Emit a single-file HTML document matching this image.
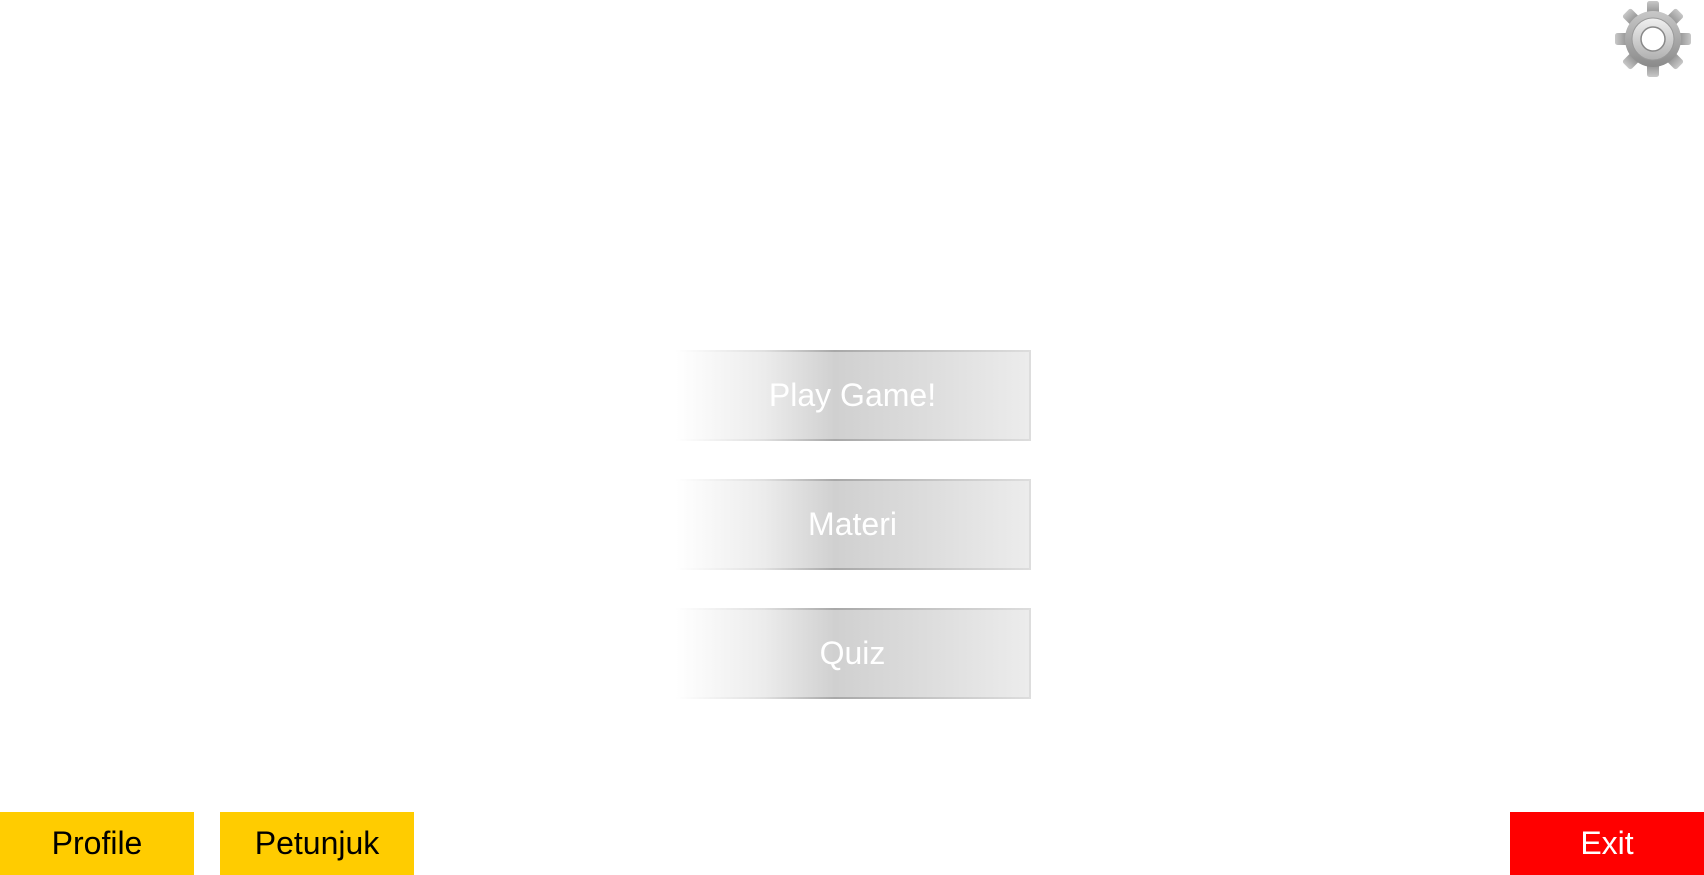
<!DOCTYPE html>
<html><head><style>
body{margin:0;width:1704px;height:875px;background:#fff;position:relative;overflow:hidden;font-family:"Liberation Sans",sans-serif}
.b{position:absolute;left:676px;width:353px;height:91px;box-sizing:border-box;
background:linear-gradient(90deg,rgba(255,255,255,1) 0%,#ececec 25%,#d0d0d0 45%,#dcdcdc 70%,#ececec 100%);
border-top:2px solid;border-bottom:2px solid;border-image:linear-gradient(90deg,#fff 0%,#e0e0e0 25%,#a8a8a8 45%,#c8c8c8 75%,#ddd 100%) 1;
color:#fff;font-size:32px;display:flex;align-items:center;justify-content:center}
.b:after{content:"";position:absolute;right:-2px;top:-2px;bottom:-2px;width:2px;background:#ddd}
.y{position:absolute;top:812px;height:63px;width:194px;background:#ffcc00;color:#000;font-size:32px;display:flex;align-items:center;justify-content:center}
</style></head><body>
<div class="b" style="top:350px">Play Game!</div>
<div class="b" style="top:479px">Materi</div>
<div class="b" style="top:608px">Quiz</div>
<div class="y" style="left:0">Profile</div>
<div class="y" style="left:220px">Petunjuk</div>
<div class="y" style="left:1510px;background:#ff0000;color:#fff">Exit</div>
<svg style="position:absolute;left:1613px;top:0" width="80" height="80" viewBox="-40 -40 80 80">
<defs><linearGradient id="g" x1="0" y1="0" x2="0" y2="1"><stop offset="0" stop-color="#c8c8c8"/><stop offset="1" stop-color="#8a8a8a"/></linearGradient>
<linearGradient id="g2" x1="0" y1="0" x2="0" y2="1"><stop offset="0" stop-color="#f0f0f0"/><stop offset="1" stop-color="#b0b0b0"/></linearGradient></defs>
<g transform="translate(0,-1)" fill="url(#g)">
<g id="t"><rect x="-6" y="-38" width="12" height="14" rx="2.5"/></g>
<use href="#t" transform="rotate(45)"/><use href="#t" transform="rotate(90)"/><use href="#t" transform="rotate(135)"/>
<use href="#t" transform="rotate(180)"/><use href="#t" transform="rotate(225)"/><use href="#t" transform="rotate(270)"/><use href="#t" transform="rotate(315)"/>
<circle r="28"/>
<circle r="21" fill="url(#g2)" stroke="#999" stroke-width="1"/>
<circle r="12" fill="#fff" stroke="#888" stroke-width="1.5"/>
</g></svg>
</body></html>
